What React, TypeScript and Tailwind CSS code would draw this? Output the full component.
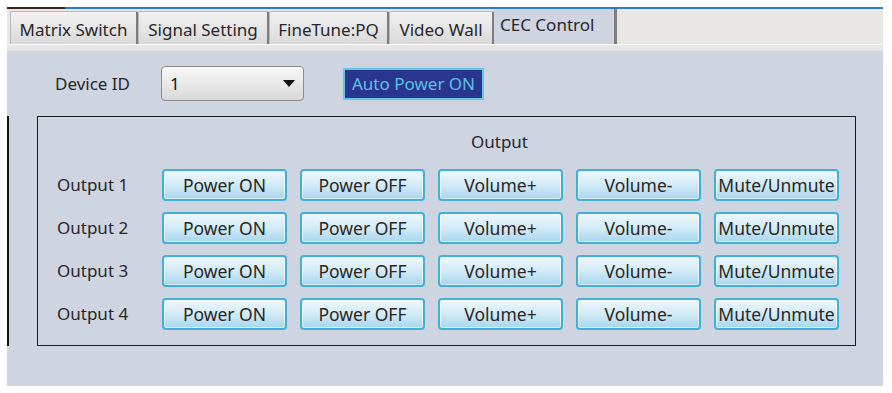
import React from "react";

const tabs = [
  { name: "Matrix Switch", w: "w-[128px]" },
  { name: "Signal Setting", w: "w-[131px]" },
  { name: "FineTune:PQ", w: "w-[120px]" },
  { name: "Video Wall", w: "w-[105px]" },
];
const actions = ["Power ON", "Power OFF", "Volume+", "Volume-", "Mute/Unmute"];
const outputs = [1, 2, 3, 4];

const font = "font-['Noto_Sans','DejaVu_Sans',sans-serif]";

const CecButton = ({ label }: { label: string }) => {
  return (
    <button className="w-[125px] h-[32px] pt-[1px] rounded-[4px] border-2 border-[#3fb0dc] bg-gradient-to-b from-[#eef7fc] via-[#d2ebf7] to-[#a7d6ee] text-[17.5px] text-[#2b2622] leading-none whitespace-nowrap shadow-[inset_0_0_0_1px_rgba(255,255,255,0.6)]">
      {label}
    </button>
  );
};

export default function App() {
  return (
    <div className={`w-[892px] h-[393px] bg-white ${font}`}>
      <div className="ml-[7px] w-[876px]">
        <div className="h-[7px]" />
        <div className="h-[2px] flex">
          <div className="w-[58px] bg-[#3a2418]" />
          <div className="flex-1 bg-[#2b7cc9]" />
        </div>

        {/* tab strip */}
        <div className="h-[35px] bg-[#e8e7e4] flex items-end pl-[3px]">
          {tabs.map((t) => (
            <div
              key={t.name}
              className={`${t.w} h-[33px] pt-[3px] flex items-center justify-center border border-[#b9b9b9] border-r-[2px] border-r-[#7d7d7d] border-b-0 rounded-t-[2px] bg-gradient-to-b from-[#f2f2f2] to-[#d9d9d9] text-[17px] text-[#27262a] whitespace-nowrap`}
            >
              {t.name}
            </div>
          ))}
          <div className="h-[35px] w-[123px] pl-[6px] pt-[3px] border-r-[3px] border-r-[#7d7d7d] bg-[#cfd5e0] text-[17px] text-[#27262a] whitespace-nowrap">
            CEC Control
          </div>
        </div>
        <div className="h-px bg-white" />
        <div className="h-[6px] bg-[#e6e6e6]" />

        {/* panel */}
        <div className="h-[335px] bg-[#cfd5e0] pt-[15px]">
          <div className="flex items-center h-[35px]">
            <span className="ml-[48px] w-[106px] text-[17px] text-[#27262a]">Device ID</span>
            <div className="w-[143px] h-[35px] rounded-[4px] border border-[#8c8c8c] bg-gradient-to-b from-[#f7f7f7] via-[#e9e9e9] to-[#d8d8d8] flex items-center justify-between pl-[8px] pr-[8px] text-[17px] text-[#111]">
              <span>1</span>
              <svg width="12" height="7" viewBox="0 0 12 7">
                <path d="M0 0h12L6 7z" fill="#111" />
              </svg>
            </div>
            <div className="ml-[39px] w-[141px] h-[32px] flex items-center justify-center bg-[#2a3590] border-2 border-[#5cc8e2] text-[17px] text-[#5cc2e0] whitespace-nowrap">
              Auto Power ON
            </div>
          </div>

          <div className="flex mt-[15px]">
            <div className="w-[2px] bg-[#111]" />
            <div className="ml-[28px] w-[819px] h-[230px] border-[1.5px] border-[#1c1c1c] pt-[14px] text-[#27262a]">
              <div className="text-center text-[17px] leading-[22px] ml-[106px]">Output</div>
              <div className="mt-[16px] flex flex-col gap-[11px]">
                {outputs.map((o) => (
                  <div key={o} className="flex items-center">
                    <span className="ml-[19px] w-[105px] text-[17px]">Output {o}</span>
                    <div className="flex gap-[13px]">
                      {actions.map((a) => (
                        <CecButton key={a} label={a} />
                      ))}
                    </div>
                  </div>
                ))}
              </div>
            </div>
          </div>
        </div>
      </div>
    </div>
  );
}
